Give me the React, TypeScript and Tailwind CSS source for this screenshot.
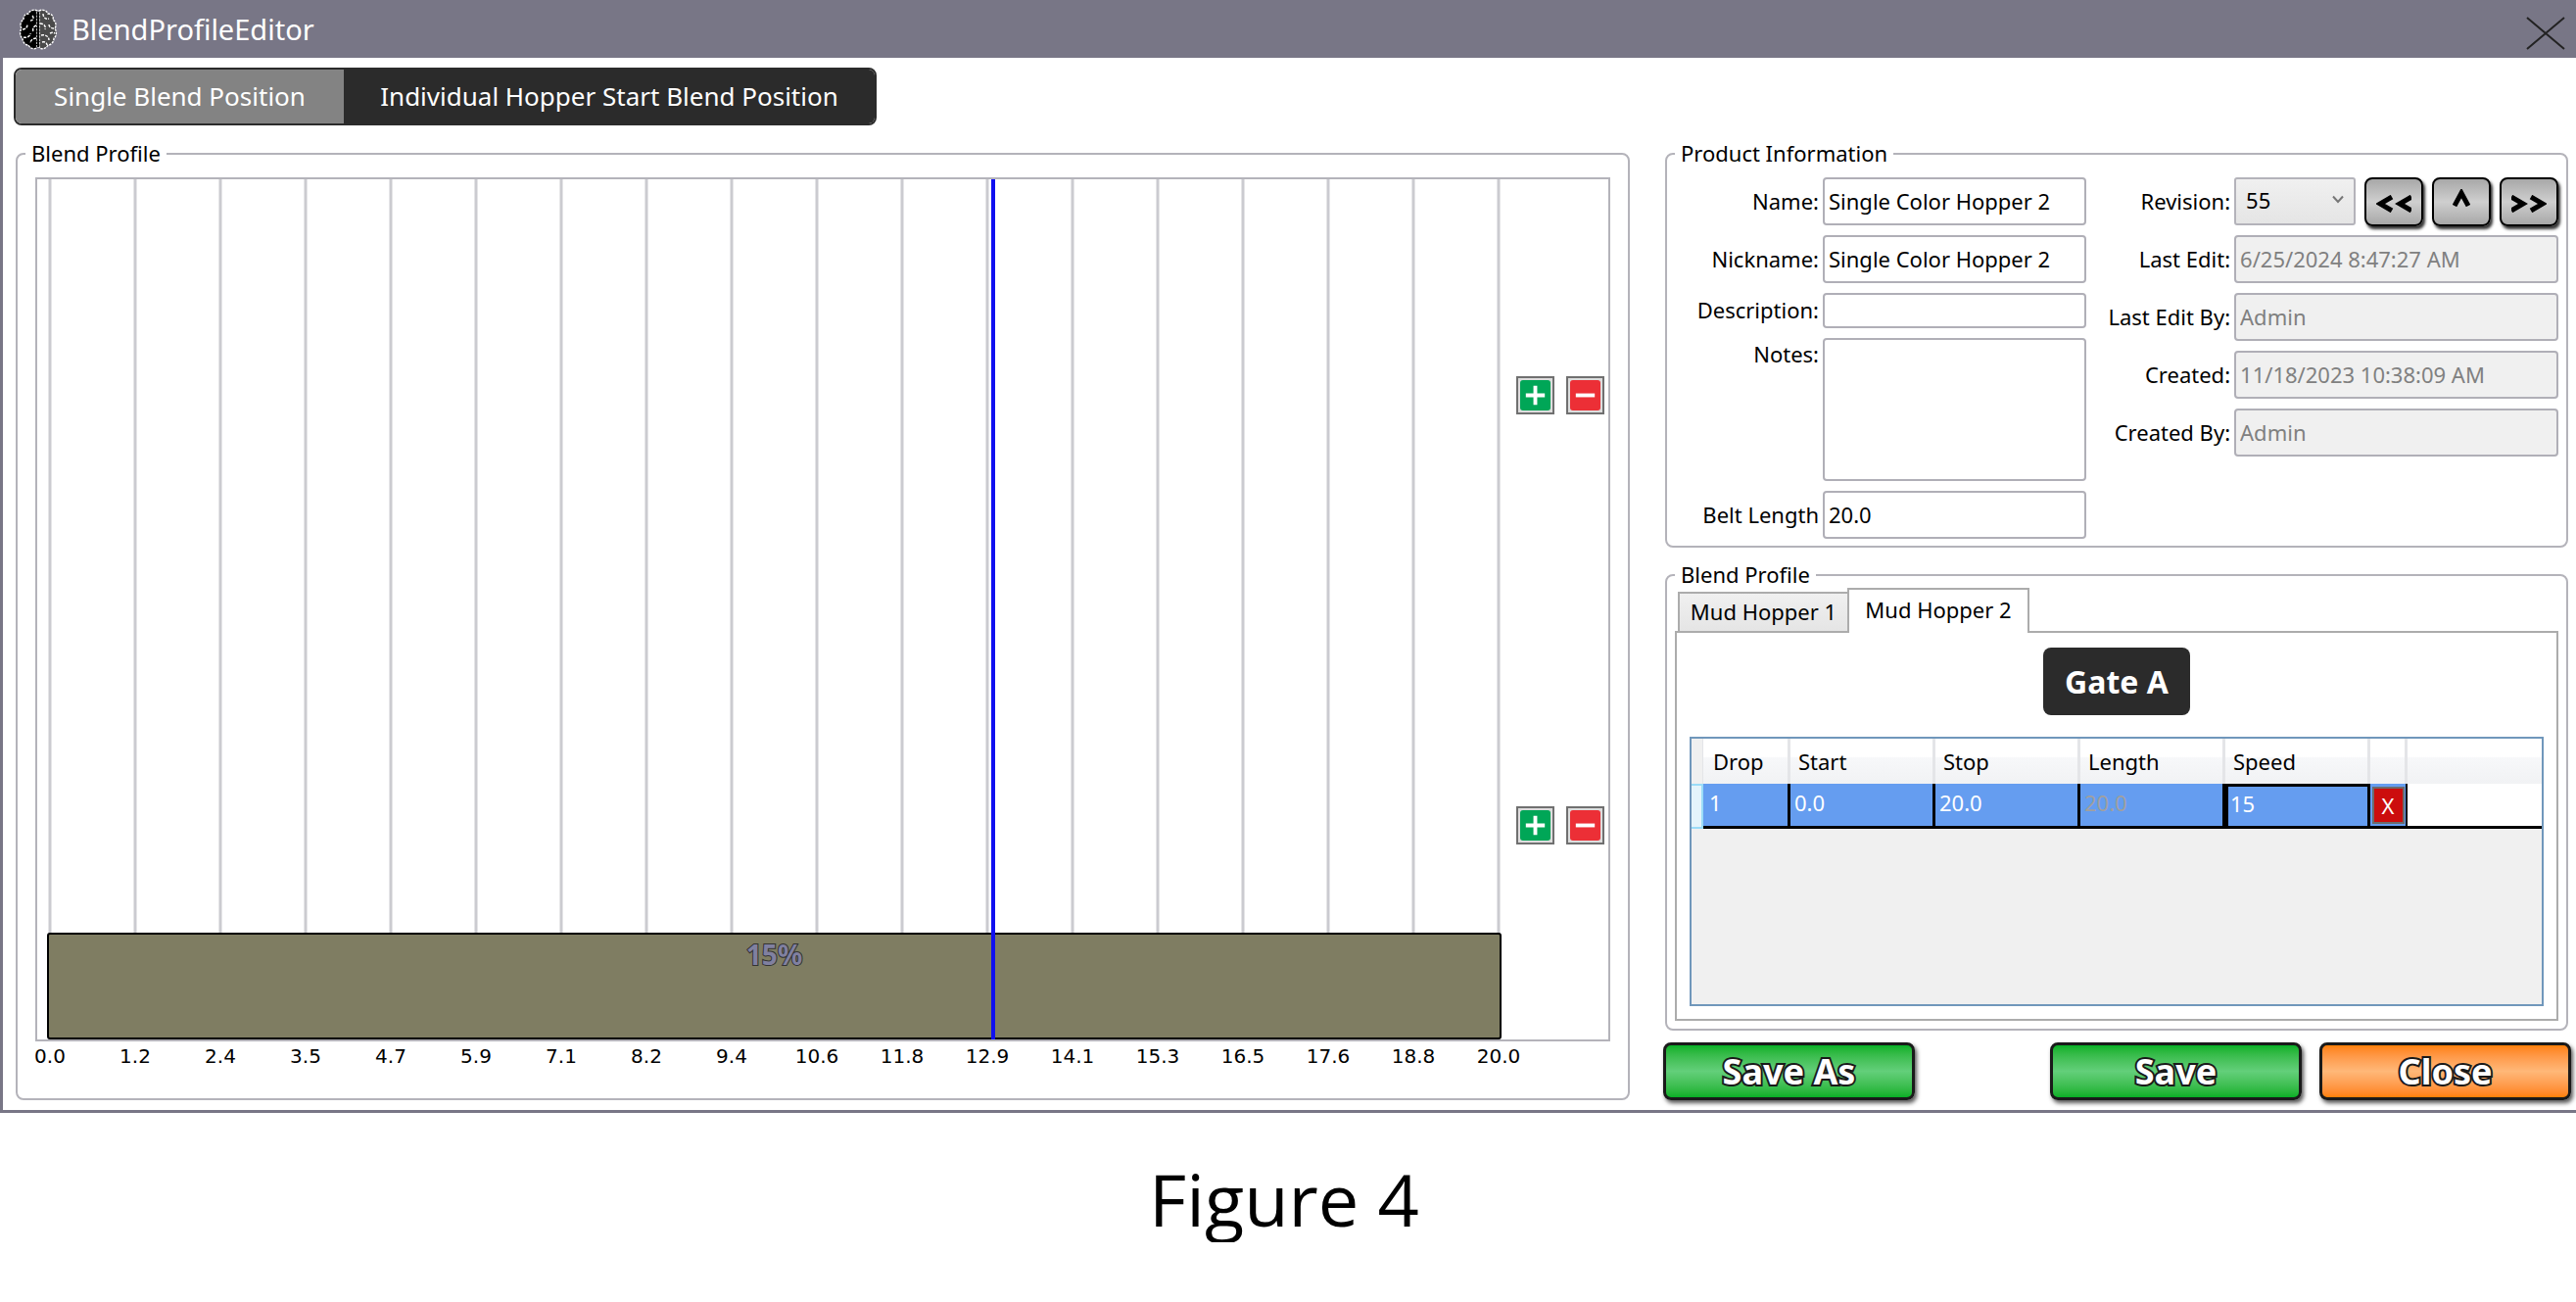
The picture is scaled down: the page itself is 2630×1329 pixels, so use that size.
import React, { useId } from "react";

const ticks = [
  "0.0", "1.2", "2.4", "3.5", "4.7", "5.9", "7.1", "8.2", "9.4",
  "10.6", "11.8", "12.9", "14.1", "15.3", "16.5", "17.6", "18.8", "20.0",
];

function BrainLogo() {
  return (
    <svg viewBox="0 0 40 42" className="h-[42px] w-10" aria-hidden="true">
      <path
        d="M19 2C15 0 11 2 10 5C6 5 5 8 5 11C2 13 1 17 3 20C1 23 1 28 4 30C4 34 7 37 10 37C12 41 17 42 19 39Z"
        fill="#000" stroke="#fff" strokeWidth="1.4" strokeDasharray="2.4 1"
      />
      <path
        d="M21 2C25 0 29 2 30 5C34 5 36 8 35 11C38 13 39 17 37 20C39 23 39 28 36 30C36 34 33 37 30 37C28 41 23 42 21 39Z"
        fill="#4a4a4a" stroke="#fff" strokeWidth="1.4" strokeDasharray="2.4 1"
      />
      <path d="M20 3V39" stroke="#000" strokeWidth="2" />
      <g fill="none" stroke="#fff" strokeWidth="1.4" strokeDasharray="3 1.2">
        <path d="M14 7C16 9 15 12 12 12M4 21C7 21 9 19 9 16M18 17C15 18 14 21 15 23M5 29C8 30 12 28 12 25M18 30C15 30 12 32 12 35" />
        <path d="M25 5C25 9 28 11 31 10M22 15C26 15 28 18 27 21M31 16C31 19 34 20 37 20M23 27C27 26 31 28 31 32M24 34C27 33 29 35 29 37M32 25C34 24 35 24 37 25" />
      </g>
    </svg>
  );
}

function Group({ title, children }: { title: string; children: React.ReactNode }) {
  return (
    <fieldset className="min-w-0 rounded-lg border-2 border-[#b4b3ba]">
      <legend className="ml-2 px-1.5 pb-0.5 leading-[30px]">{title}</legend>
      {children}
    </fieldset>
  );
}

function Field({ label, value, disabled = false, h = "h-[49px]" }: { label: string; value: string; disabled?: boolean; h?: string }) {
  const id = useId();
  return (
    <>
      <label htmlFor={id} className="self-center pb-0.5 text-right whitespace-nowrap">{label}</label>
      <input
        id={id}
        defaultValue={value}
        disabled={disabled}
        className={`${h} w-full min-w-0 rounded-[4px] border-2 border-[#b0afb7] bg-white px-1 pb-0.5 disabled:bg-[#f0f0f0] disabled:text-[#808080]`}
      />
    </>
  );
}

function NavButton({ label, children }: { label: string; children: React.ReactNode }) {
  return (
    <button
      aria-label={label}
      className="flex h-[50px] w-[60px] items-center justify-center rounded-lg border-2 border-black bg-linear-to-b from-[#a8a8a8] via-[#cfcfcf] to-[#a8a8a8] shadow-[2px_3px_3px_#333]"
    >
      {children}
    </button>
  );
}

function ChartButtons() {
  return (
    <div className="flex justify-end gap-3 pt-0.5 pr-1">
      <button aria-label="Add drop" className="size-[39px] border-2 border-[#707070] bg-[#dddddd] p-0.5">
        <svg viewBox="0 0 32 32" className="size-full">
          <rect width="32" height="32" rx="3" fill="#00a657" />
          <path d="M16 6V26M6 16H26" stroke="#fff" strokeWidth="4" />
        </svg>
      </button>
      <button aria-label="Remove drop" className="size-[39px] border-2 border-[#707070] bg-[#dddddd] p-0.5">
        <svg viewBox="0 0 32 32" className="size-full">
          <rect width="32" height="32" rx="3" fill="#ec2f36" />
          <path d="M6 16H26" stroke="#fff" strokeWidth="4" />
        </svg>
      </button>
    </div>
  );
}

function BlendChart() {
  return (
    <div className="px-[18px] pt-2 pb-3">
      <div className="flex h-[882px] border-2 border-[#b4b3ba] pl-[13px]">
        <div className="relative flex-1">
          <svg className="absolute inset-0 size-full overflow-visible" aria-hidden="true">
            {ticks.map((t, i) => (
              <line key={t} x1={`${(i / 17) * 100}%`} x2={`${(i / 17) * 100}%`} y1="0" y2="100%" stroke="#cbcbd0" strokeWidth="3" />
            ))}
          </svg>
          <div className="absolute -inset-x-[3px] bottom-0 h-[109px] rounded-[3px] border-2 border-black bg-[#7f7d62] pt-1 text-center text-[28px] leading-8 font-bold text-[#8080a0] [-webkit-text-stroke:2px_#333] [paint-order:stroke_fill]">
            15%
          </div>
          <div className="absolute inset-y-0 left-[65%] w-1 bg-[#1010f0]" />
        </div>
        <div className="grid w-[112px] grid-rows-2 items-center">
          <ChartButtons />
          <ChartButtons />
        </div>
      </div>
      <div className="mr-[114px] ml-[15px] flex justify-between font-['DejaVu_Sans',sans-serif] text-[20px] leading-[30px]">
        {ticks.map((t) => (
          <span key={t} className="flex w-0 justify-center whitespace-nowrap">{t}</span>
        ))}
      </div>
    </div>
  );
}

function ProductInfo() {
  return (
    <Group title="Product Information">
      <div className="grid grid-cols-[429fr_483fr] pt-2 pr-2 pb-[7px]">
        <div className="grid grid-cols-[155px_1fr] content-start gap-x-1 gap-y-2.5">
          <Field label="Name:" value="Single Color Hopper 2" />
          <Field label="Nickname:" value="Single Color Hopper 2" />
          <Field label="Description:" value="" h="h-9" />
          <label htmlFor="notes" className="text-right leading-8">Notes:</label>
          <textarea id="notes" className="h-[146px] w-full resize-none rounded-[4px] border-2 border-[#b0afb7] bg-white px-1" />
          <Field label="Belt Length" value="20.0" />
        </div>
        <div className="grid grid-cols-[147px_1fr] content-start gap-x-1 gap-y-2.5">
          <label htmlFor="revision" className="self-center pb-0.5 text-right">Revision:</label>
          <div className="flex h-[49px] justify-between">
            <div className="relative h-[49px] w-[124px]">
              <select
                id="revision"
                className="size-full appearance-none rounded-[3px] border-2 border-[#b4b3ba] bg-linear-to-b from-[#f0f0f0] to-[#e5e5e5] pb-1 pl-2.5"
              >
                <option>55</option>
              </select>
              <svg viewBox="0 0 12 9" className="pointer-events-none absolute top-[18px] right-3 h-[9px] w-3" aria-hidden="true">
                <path d="M1 1.5L6 7L11 1.5" fill="none" stroke="#777" strokeWidth="2" />
              </svg>
            </div>
            <NavButton label="Previous revision">
              <svg viewBox="0 0 36 18" className="mt-1 h-[18px] w-9" fill="none" stroke="#000" strokeWidth="5">
                <path d="M16 2L4 9L16 16M36 2L24 9L36 16" />
              </svg>
            </NavButton>
            <NavButton label="Latest revision">
              <svg viewBox="0 0 18 18" className="-mt-2 size-[18px]" fill="none" stroke="#000" strokeWidth="5">
                <path d="M2 17L9 4L16 17" />
              </svg>
            </NavButton>
            <NavButton label="Next revision">
              <svg viewBox="0 0 36 18" className="mt-1 h-[18px] w-9" fill="none" stroke="#000" strokeWidth="5">
                <path d="M0 2L12 9L0 16M20 2L32 9L20 16" />
              </svg>
            </NavButton>
          </div>
          <Field label="Last Edit:" value="6/25/2024 8:47:27 AM" disabled />
          <Field label="Last Edit By:" value="Admin" disabled />
          <Field label="Created:" value="11/18/2023 10:38:09 AM" disabled />
          <Field label="Created By:" value="Admin" disabled />
        </div>
      </div>
    </Group>
  );
}

function DropTable() {
  const th = "border-r-[3px] border-[#e4e5e8] pl-2 text-left font-normal";
  const td = "border-r-[3px] border-b-[3px] border-black bg-[#659df0] pb-1.5 pl-1";
  return (
    <div className="h-[275px] border-2 border-[#7097bb] bg-[#f0f0f0]">
      <table className="w-full table-fixed border-separate border-spacing-0">
        <colgroup>
          <col className="w-3" />
          <col className="w-[89px]" />
          <col className="w-[148px]" />
          <col className="w-[148px]" />
          <col className="w-[148px]" />
          <col className="w-[148px]" />
          <col className="w-[38px]" />
          <col />
        </colgroup>
        <thead>
          <tr className="h-[46px] bg-linear-to-b from-white from-40% via-[#f7f8fa] via-41% to-[#f1f2f4]">
            <th className="border-r border-[#e4e5e8] bg-[#f0f0f0]" />
            <th className={`${th} pl-2.5`}>Drop</th>
            <th className={th}>Start</th>
            <th className={th}>Stop</th>
            <th className={th}>Length</th>
            <th className={th}>Speed</th>
            <th className={th} />
            <th />
          </tr>
        </thead>
        <tbody>
          <tr className="h-[46px] text-white">
            <td className="border-2 border-l-0 border-[#9adcf8] bg-[#e4f4fb]" />
            <td className={`${td} pl-1.5`}>1</td>
            <td className={td}>0.0</td>
            <td className={td}>20.0</td>
            <td className={`${td} text-[#a0a0a0]`}>20.0</td>
            <td className="border-[3px] border-black bg-[#659df0] pb-1.5 pl-0.5">15</td>
            <td className="border-r-2 border-b-[3px] border-black bg-[#659df0]">
              <button aria-label="Delete drop" className="mx-auto block h-[38px] w-[33px] border-2 border-[#6c6c6c] bg-[#cc0d0d] leading-[34px]">X</button>
            </td>
            <td className="border-b-[3px] border-black bg-white" />
          </tr>
        </tbody>
      </table>
    </div>
  );
}

function HopperPanel() {
  return (
    <Group title="Blend Profile">
      <div className="px-2 pb-2">
        <div role="tablist" className="-mt-[3px] flex items-end pl-[3px]">
          <button role="tab" aria-selected="false" className="h-10 w-[175px] border-2 border-b-0 border-[#acacac] bg-linear-to-b from-[#f0f0f0] to-[#e5e5e5] pb-0.5">
            Mud Hopper 1
          </button>
          <button role="tab" aria-selected="true" className="relative -mb-0.5 -ml-0.5 h-[46px] w-[186px] border-2 border-b-0 border-[#acacac] bg-white pb-1">
            Mud Hopper 2
          </button>
        </div>
        <div role="tabpanel" className="border-2 border-[#acacac] p-[13px] pt-[15px]">
          <button className="mx-auto mb-[22px] block h-[69px] w-[150px] rounded-lg bg-[#2b2b2b] text-[32px] font-bold text-white">
            Gate A
          </button>
          <DropTable />
        </div>
      </div>
    </Group>
  );
}

const action =
  "h-[59px] w-[257px] rounded-lg border-[3px] border-[#1a1a1a] bg-linear-to-b text-[36px] leading-[52px] font-bold text-white shadow-[2px_3px_4px_#555] [-webkit-text-stroke:4px_#1a1a1a] [paint-order:stroke_fill]";

export default function App() {
  return (
    <div className="bg-white font-['Noto_Sans',sans-serif] text-[22px] leading-8 text-black">
      <main className="border-b-[3px] border-l-[3px] border-[#787686] bg-white">
        <header className="flex h-[59px] items-center bg-[#787686] pr-2.5 pl-4 text-white">
          <BrainLogo />
          <h1 className="ml-3.5 flex-1 text-[29px]">BlendProfileEditor</h1>
          <button aria-label="Close window" className="mt-2">
            <svg viewBox="0 0 42 36" className="h-9 w-[42px]">
              <path d="M2 2L40 34M40 2L2 34" stroke="#222" strokeWidth="2" />
            </svg>
          </button>
        </header>
        <nav className="flex px-[11px] pt-2.5">
          <div className="flex overflow-hidden rounded-lg border-2 border-[#2b2b2b] text-[26px] text-white">
            <button className="h-[55px] w-[335px] bg-[#838383] pb-0.5">Single Blend Position</button>
            <button className="h-[55px] w-[542px] bg-[#2b2b2b] pb-0.5">Individual Hopper Start Blend Position</button>
          </div>
        </nav>
        <div className="grid grid-cols-[1648fr_927fr] gap-[34px] pt-[13px] pr-[5px] pb-2.5 pl-[13px]">
          <Group title="Blend Profile">
            <BlendChart />
          </Group>
          <div className="flex flex-col gap-3">
            <div className="flex flex-col gap-3 pr-[3px] pl-0.5">
              <ProductInfo />
              <HopperPanel />
            </div>
            <div className="flex">
              <button className={`${action} from-[#04b025] via-[#63cf7a] to-[#04b025]`}>Save As</button>
              <button className={`${action} mr-[18px] ml-auto from-[#04b025] via-[#63cf7a] to-[#04b025]`}>Save</button>
              <button className={`${action} from-[#ff8000] via-[#ffb878] to-[#ff8000]`}>Close</button>
            </div>
          </div>
        </div>
      </main>
      <p className="mt-11 pr-2 text-center font-['Open_Sans',sans-serif] text-[74px] leading-[88px]">Figure 4</p>
    </div>
  );
}
